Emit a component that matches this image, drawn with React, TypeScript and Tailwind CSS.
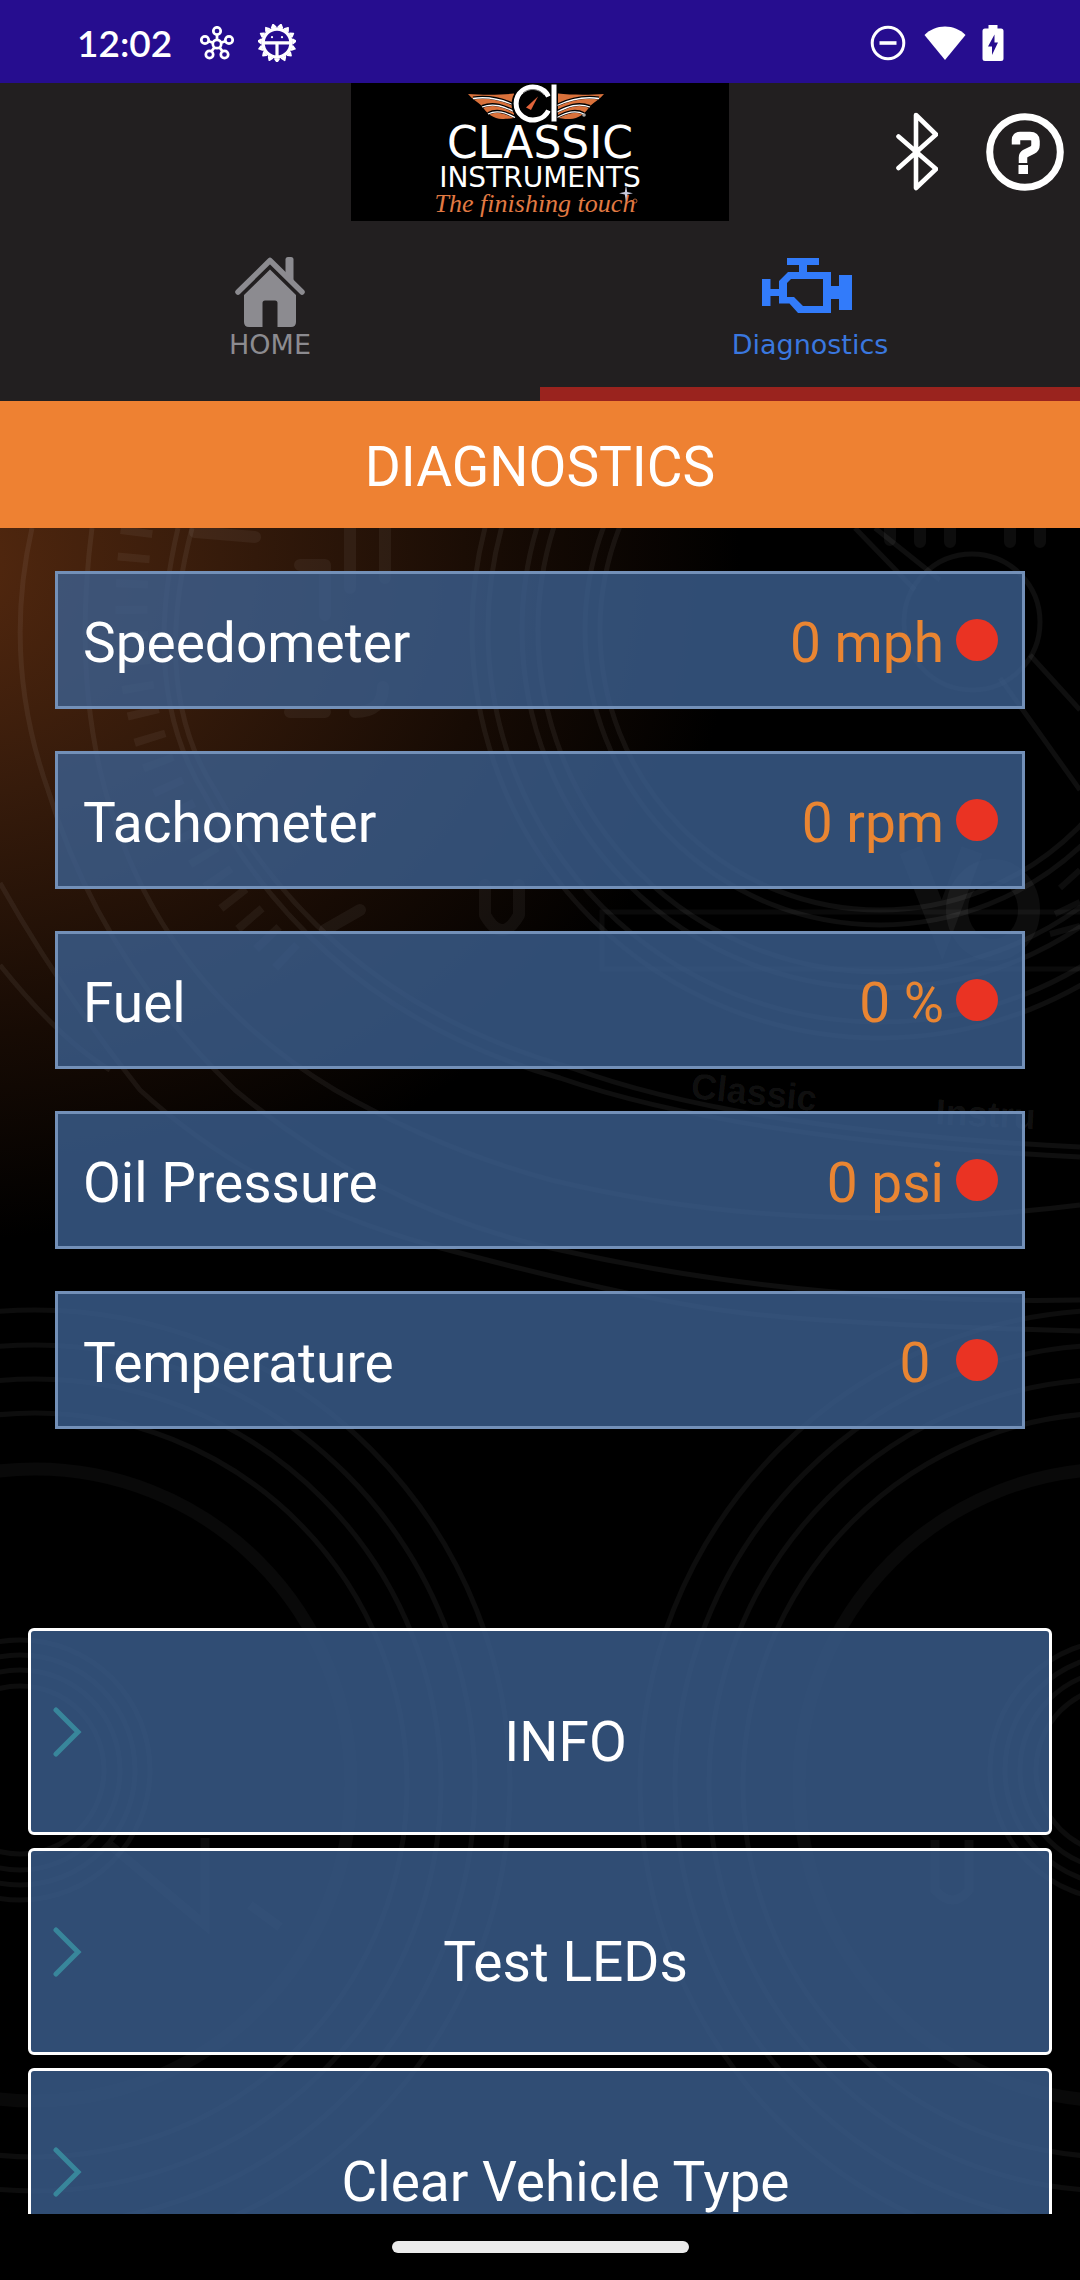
const readings = [
  { name: "Speedometer", value: "0 mph" },
  { name: "Tachometer", value: "0 rpm" },
  { name: "Fuel", value: "0 %" },
  { name: "Oil Pressure", value: "0 psi" },
  { name: "Temperature", value: "0 " },
];

const actions = ["INFO", "Test LEDs", "Clear Vehicle Type"];

function HubIcon() {
  const nodes = [
    [17, 5],
    [29, 14],
    [24.5, 28.5],
    [9.5, 28.5],
    [5, 14],
  ];
  return (
    <svg className="h-[34px] w-[34px]" viewBox="0 0 34 34" fill="none" stroke="#fff" strokeWidth="2.7" aria-hidden="true">
      <circle cx="17" cy="18" r="4.2" />
      <path d="M17 9v5M21 16.8l4.2-1.5M19.6 21.4l2.8 3.8M14.4 21.4l-2.8 3.8M13 16.8l-4.2-1.5" />
      {nodes.map(([x, y]) => (
        <circle key={`${x}-${y}`} cx={x} cy={y} r="3.7" />
      ))}
    </svg>
  );
}

function BugGearIcon() {
  return (
    <svg className="h-[38px] w-[38px]" viewBox="0 0 38 38" fill="none" stroke="#fff" aria-hidden="true">
      <circle cx="19" cy="19" r="14" strokeWidth="3.4" />
      {Array.from({ length: 15 }, (_, i) => (
        <path key={i} d="M16.9 35l2.1 3 2.1-3z" strokeWidth="1.5" strokeLinejoin="round" fill="#fff" transform={`rotate(${i * 24} 19 19)`} />
      ))}
      <path d="M6 18.8h26M19 19v14" strokeWidth="3.2" />
      <circle cx="14" cy="13.2" r="1.1" fill="#fff" stroke="none" />
      <circle cx="24" cy="13.2" r="1.1" fill="#fff" stroke="none" />
    </svg>
  );
}

function StatusBar() {
  return (
    <div className="flex h-[83px] shrink-0 items-center justify-between bg-[#260d8f] pt-0.5 pr-[76px] pl-[77px]">
      <div className="flex items-center">
        <time className="font-['Lato',sans-serif] text-[37px] leading-10 font-semibold text-white">12:02</time>
        <div className="ml-7 flex items-center gap-6">
          <HubIcon />
          <BugGearIcon />
        </div>
      </div>
      <div className="flex items-center">
        <svg className="h-9 w-9" viewBox="0 0 36 36" fill="none" stroke="#fff" strokeWidth="3" aria-hidden="true">
          <circle cx="18" cy="18" r="15.8" />
          <path d="M9.5 18h17" strokeWidth="3.6" />
        </svg>
        <svg className="ml-[18px] h-9 w-[42px]" viewBox="0 0 42 36" fill="#fff" aria-hidden="true">
          <path d="M21 35L.5 10C6 4.500 13 1.500 21 1.500S36 4.500 41.500 10z" />
        </svg>
        <svg className="ml-4 h-9 w-[22px]" viewBox="0 0 22 36" aria-hidden="true">
          <path d="M6.500 0h9v3.500H19a2.500 2.500 0 0 1 2.500 2.500v27.500A2.500 2.500 0 0 1 19 36H3a2.500 2.500 0 0 1-2.500-2.500V6A2.500 2.500 0 0 1 3 3.500h3.500z" fill="#fff" />
          <path d="M12.500 9.500L6 21.500h4V30l6-12.500h-3.500z" fill="#260d8f" />
        </svg>
      </div>
    </div>
  );
}

function Wing() {
  return (
    <g>
      <path d="M0 2C14 3 34 3 46 1.500L46 26C40 27 37 27 34 27C26 27 18 21 14 14C10 10 4 7 0 2z" fill="#d9713b" />
      <path d="M5 6C18 4 34 7 47 13M14 14.500C26 10 36 14 47 19.500M20 21.500C29 17 37 20 47 25" fill="none" stroke="#000" strokeWidth="3" />
      <path d="M5 6.500C18 4.500 34 7.500 47 13.500M14 15C26 10.500 36 14.500 47 20M20 22C29 17.500 37 20.500 47 25.500" fill="none" stroke="#fff" strokeWidth="1.300" />
    </g>
  );
}

function Logo() {
  return (
    <svg className="h-[138px] w-[378px] bg-black" viewBox="0 0 378 138" role="img" aria-label="Classic Instruments, The finishing touch">
      <g transform="translate(117 9)">
        <Wing />
      </g>
      <g transform="translate(253 9) scale(-1 1)">
        <Wing />
      </g>
      <circle cx="181" cy="21" r="20.500" fill="#000" />
      <path d="M197.500 13.500A17 16.500 0 1 0 197.500 27.500" fill="none" stroke="#fff" strokeWidth="5" />
      <path d="M193 12A14 13 0 0 0 172 10" fill="none" stroke="#777" strokeWidth="1" />
      <rect x="200" y="1" width="6" height="38" fill="#fff" stroke="#000" strokeWidth="1" />
      <path d="M187 13.500L180 27l-5-2.500z" fill="#e0633a" />
      <circle cx="233" cy="32" r="1.800" fill="#aaa" />
      <text x="189" y="75" textAnchor="middle" fill="#fff" fontFamily="'DejaVu Sans', sans-serif" fontSize="44">
        CLASSIC
      </text>
      <text x="189" y="104" textAnchor="middle" fill="#fff" fontFamily="'DejaVu Sans', sans-serif" fontSize="28">
        INSTRUMENTS
      </text>
      <text x="184" y="129" textAnchor="middle" fill="#e27a43" fontFamily="'Liberation Serif', serif" fontSize="26" fontStyle="italic">
        The finishing touch
      </text>
      <path d="M275 102l1.200 7 5.800 1.200-5.800 1.300L275 119l-1.200-7.500-5.800-1.300 5.800-1.200z" fill="#c9c9dd" />
      <circle cx="284" cy="118" r="2" fill="none" stroke="#d9713b" strokeWidth="0.800" />
    </svg>
  );
}

function Header() {
  return (
    <header className="shrink-0 bg-[#221f20]">
      <div className="grid grid-cols-[1fr_auto_1fr] items-center">
        <span />
        <Logo />
        <div className="flex items-center justify-end gap-12 pr-4">
          <button type="button" aria-label="Bluetooth">
            <svg className="h-20 w-[42px]" viewBox="0 0 42 80" fill="none" stroke="#fff" strokeWidth="4.600" strokeLinecap="round" strokeLinejoin="round" aria-hidden="true">
              <path d="M2.500 24.500L40 57 20 76V3l20 19.500L2.500 56" />
            </svg>
          </button>
          <button type="button" aria-label="Help">
            <svg className="h-[78px] w-[78px]" viewBox="0 0 78 78" fill="none" stroke="#fff" aria-hidden="true">
              <circle cx="39" cy="39" r="35.300" strokeWidth="7" />
              <path d="M30 31.500V27q0-4 4-4h10q5.500 0 5.500 5v4q0 3.500-3 5l-7 3.500q-2.500 1.500-2.500 4V50" strokeWidth="8.500" />
              <path d="M32.500 56.500h9.500" strokeWidth="9" />
            </svg>
          </button>
        </div>
      </div>
      <nav className="grid grid-cols-2 font-['DejaVu_Sans',sans-serif] text-[27px] leading-8">
        <a href="#home" className="flex flex-col items-center gap-0.5 pt-9 text-[#8c8b90]">
          <svg className="h-[70px] w-[70px]" viewBox="0 0 70 70" fill="#8c8b90" aria-hidden="true">
            <path d="M3 35L35 3.500 67 35" fill="none" stroke="#8c8b90" strokeWidth="5.500" strokeLinecap="round" strokeLinejoin="round" />
            <path d="M50.500 2.500q0-2.500 2.500-2.500h3q2.500 0 2.500 2.500V25l-8-8z" />
            <path d="M35 12.500L61 38v27q0 5-5 5H42.500V46q0-2.500-2.500-2.500H30q-2.500 0-2.500 2.500v24H14q-5 0-5-5V38z" />
          </svg>
          <span>HOME</span>
        </a>
        <a href="#diagnostics" aria-current="page" className="flex flex-col items-center gap-0.5 border-b-[14px] border-[#9a231e] pt-9 pb-[26px] text-[#3a77df]">
          <svg className="h-[70px] w-24" viewBox="0 0 96 70" aria-hidden="true">
            <g fill="#327bfa">
              <path d="M25 1h32v7H45v8H37V8H25z" />
              <path d="M0 22h8.500v10H17v7H8.500v10H0z" />
              <path fillRule="evenodd" d="M26 15h43v14h8V18h13v35H77V42h-8v14H36L27.500 46.500H17V24zM29 22l-4 4v14h7l9 9h20V22z" />
            </g>
          </svg>
          <span>Diagnostics</span>
        </a>
      </nav>
    </header>
  );
}

function GaugeBackdrop() {
  return (
    <svg className="absolute inset-0 h-full w-full" viewBox="0 528 1080 1686" preserveAspectRatio="xMidYMin slice" aria-hidden="true">
      <defs>
        <radialGradient id="glow" gradientUnits="userSpaceOnUse" cx="0" cy="0" r="1" gradientTransform="translate(-60 560) scale(800 680)">
          <stop offset="0" stopColor="#55290f" />
          <stop offset="0.350" stopColor="#361b0b" />
          <stop offset="0.700" stopColor="#170b04" />
          <stop offset="1" stopColor="#000" />
        </radialGradient>
      </defs>
      <rect y="528" width="1080" height="1686" fill="#000" />
      <rect y="528" width="1080" height="1686" fill="url(#glow)" />
      <g fill="none" stroke="#fff" strokeOpacity="0.060" strokeWidth="5">
        <path d="M0 883Q60 990 140 1090Q260 1200 441 1248T720 1310T1080 1331" />
        <path d="M0 965Q60 1040 110 1070" />
        <path d="M32 528Q2 660 48 790Q100 960 235 1090Q380 1210 551 1248Q800 1305 1080 1300" />
        <path d="M92 528Q75 660 100 770Q150 980 335 1090Q440 1150 551 1180Q800 1240 1080 1205" />
        <path d="M192 528Q150 690 215 790Q330 1000 572 1068Q740 1130 1080 1147" />
        <path d="M178 528Q140 690 205 795Q320 1010 560 1078Q740 1140 1080 1157" />
        <path d="M137 528Q115 690 180 810Q215 890 290 960" strokeWidth="32" strokeDasharray="8 18" strokeOpacity="0.050" />
        <circle cx="880" cy="630" r="408" />
        <circle cx="880" cy="630" r="392" />
        <circle cx="880" cy="630" r="358" />
        <circle cx="880" cy="630" r="342" />
        <circle cx="880" cy="630" r="295" />
        <circle cx="880" cy="630" r="280" />
        <circle cx="972" cy="622" r="68" />
        <path d="M855 528L915 590M875 528L940 580M1000 678L1080 790M1030 655L1080 710" />
        <path d="M1080 912H602V969H1080" strokeOpacity="0.040" />
      </g>
      <g fill="none" stroke="#fff" strokeOpacity="0.050" strokeWidth="12" strokeLinecap="round" strokeLinejoin="round">
        <path d="M195 532L255 537M300 565h25v50M350 528v60M385 528v50M290 712h35M355 712q28 0 28-25" />
        <path d="M485 885v30q17 30 34 0v-30M325 930l35-20" />
        <path d="M890 528v12M920 528v14M950 528v14M1010 528v14M1040 528v14" />
      </g>
      <g fill="none" stroke="#fff" strokeOpacity="0.050" strokeWidth="22">
        <path d="M910 850l32 80 30-80" />
        <ellipse cx="993" cy="910" rx="36" ry="40" />
        <path d="M1080 870l-20 18M1080 902l-25 12M1080 926l-30 8" strokeWidth="6" />
      </g>
      <g fill="#fff" fillOpacity="0.070" fontFamily="'Liberation Sans', sans-serif" fontSize="36" fontWeight="700">
        <text x="690" y="1098" transform="rotate(6 690 1098)">
          Classic
        </text>
        <text x="935" y="1124" transform="rotate(3 935 1124)">
          Instru
        </text>
      </g>
      <g fill="none" stroke="#fff" strokeOpacity="0.050" strokeWidth="5">
        {[35, 1115].map((cx) => (
          <g key={cx}>
            <circle cx={cx} cy="1785" r="316" strokeWidth="13" strokeOpacity="0.035" />
            <circle cx={cx} cy="1785" r="372" />
            <circle cx={cx} cy="1785" r="406" />
            <circle cx={cx} cy="1785" r="440" />
            <circle cx={cx} cy="1785" r="475" />
          </g>
        ))}
        {[20, 1120].map((cx) => (
          <g key={cx}>
            <circle cx={cx} cy="1770" r="130" />
            <circle cx={cx} cy="1770" r="115" />
            <circle cx={cx} cy="1770" r="100" />
            <circle cx={cx} cy="1770" r="84" />
          </g>
        ))}
        <path d="M110 1845L205 1925V1838M205 1838v60M250 1905l30 22M935 1840v50q18 20 34 0v-50" strokeWidth="9" />
      </g>
    </svg>
  );
}

export default function App() {
  return (
    <div className="flex h-screen flex-col overflow-hidden bg-black font-['Roboto',sans-serif] text-[55px] leading-[66px] text-white">
      <StatusBar />
      <Header />
      <h1 className="shrink-0 bg-[#ee8132] pt-[33px] pb-7 text-center">DIAGNOSTICS</h1>
      <main className="relative min-h-0 flex-1 overflow-hidden">
        <GaugeBackdrop />
        <div className="relative pt-[43px]">
          <ul className="flex flex-col gap-[42px] px-[55px]">
            {readings.map(({ name, value }) => (
              <li key={name} className="flex h-[138px] items-center border-[3px] border-[#7390b8] bg-[#3c6091]/80 pr-6 pl-[25px]">
                <span className="flex-1 pt-1.5">{name}</span>
                <span className="pt-1.5 whitespace-pre text-[#e98532]">{value}</span>
                <span className="ml-3 h-[42px] w-[42px] rounded-full bg-[#ea3323]" />
              </li>
            ))}
          </ul>
          <div className="mt-[199px] flex flex-col gap-[13px] px-7">
            {actions.map((label) => (
              <button key={label} type="button" className="flex h-[207px] items-center rounded-md border-[3px] border-white bg-[#3c6091]/80 pl-[21px]">
                <svg className="h-[50px] w-[30px]" viewBox="0 0 30 50" fill="none" stroke="#38869b" strokeWidth="5" strokeLinecap="round" aria-hidden="true">
                  <path d="M4 3l22 22L4 47" />
                </svg>
                <span className="flex-1 pt-5 text-center">{label}</span>
              </button>
            ))}
          </div>
        </div>
      </main>
      <div className="flex h-[66px] shrink-0 items-center justify-center bg-black">
        <div className="h-3 w-[297px] rounded-full bg-[#ebebeb]" />
      </div>
    </div>
  );
}
